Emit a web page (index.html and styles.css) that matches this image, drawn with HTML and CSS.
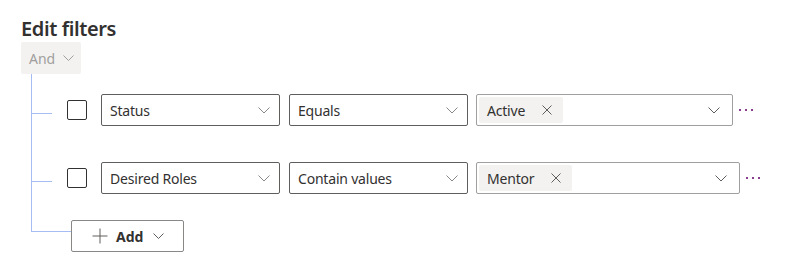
FILE: index.html
```html
<!DOCTYPE html>
<html lang="en">
<head>
	<meta charset="UTF-8">
	<title>Edit filters</title>
	<link rel="stylesheet" href="styles.css">
</head>
<body>
	<div class="panel">
		<h1 class="title">Edit filters</h1>
		<div class="group-op">
			<span>And</span>
			<svg class="chev" width="11" height="6" viewBox="0 0 11 6"><path d="M0.5 0.5 L5.5 5.5 L10.5 0.5"/></svg>
		</div>
		<div class="tree">
			<div class="row row-first">
				<div class="branch"></div>
				<div class="check"></div>
				<div class="select field">
					<span>Status</span>
					<svg class="chev" width="12" height="7" viewBox="0 0 12 7"><path d="M0.5 0.5 L6 6 L11.5 0.5"/></svg>
				</div>
				<div class="select op">
					<span>Equals</span>
					<svg class="chev" width="12" height="7" viewBox="0 0 12 7"><path d="M0.5 0.5 L6 6 L11.5 0.5"/></svg>
				</div>
				<div class="values" style="width:257px">
					<div class="tag">
						<span>Active</span>
						<svg class="x" width="10" height="10" viewBox="0 0 10 10"><path d="M0.5 0.5 L9.5 9.5 M9.5 0.5 L0.5 9.5"/></svg>
					</div>
					<svg class="chev" width="12" height="7" viewBox="0 0 12 7"><path d="M0.5 0.5 L6 6 L11.5 0.5"/></svg>
				</div>
				<svg class="more" width="15" height="3" viewBox="0 0 15 3"><rect x="0" y="0" width="2" height="2"/><rect x="6" y="0" width="2" height="2"/><rect x="12" y="0" width="2" height="2"/></svg>
			</div>
			<div class="row row-second">
				<div class="branch"></div>
				<div class="check"></div>
				<div class="select field">
					<span>Desired Roles</span>
					<svg class="chev" width="12" height="7" viewBox="0 0 12 7"><path d="M0.5 0.5 L6 6 L11.5 0.5"/></svg>
				</div>
				<div class="select op">
					<span>Contain values</span>
					<svg class="chev" width="12" height="7" viewBox="0 0 12 7"><path d="M0.5 0.5 L6 6 L11.5 0.5"/></svg>
				</div>
				<div class="values" style="width:264px">
					<div class="tag">
						<span>Mentor</span>
						<svg class="x" width="10" height="10" viewBox="0 0 10 10"><path d="M0.5 0.5 L9.5 9.5 M9.5 0.5 L0.5 9.5"/></svg>
					</div>
					<svg class="chev" width="12" height="7" viewBox="0 0 12 7"><path d="M0.5 0.5 L6 6 L11.5 0.5"/></svg>
				</div>
				<svg class="more" width="15" height="3" viewBox="0 0 15 3"><rect x="0" y="0" width="2" height="2"/><rect x="6" y="0" width="2" height="2"/><rect x="12" y="0" width="2" height="2"/></svg>
			</div>
			<div class="row row-add">
				<div class="branch-end"></div>
				<button class="add-btn">
					<svg class="plus" width="16" height="16" viewBox="0 0 16 16"><path d="M8 0.5 V15.5 M0.5 8 H15.5"/></svg>
					<span>Add</span>
					<svg class="chev" width="11" height="6" viewBox="0 0 11 6"><path d="M0.5 0.5 L5.5 5.5 L10.5 0.5"/></svg>
				</button>
			</div>
		</div>
	</div>
</body>
</html>
```

FILE: styles.css
```css
*{
	margin: 0;
	padding: 0;
	box-sizing: border-box;
}
body{
	font-family: "Noto Sans", "Open Sans", sans-serif;
	color: #323130;
	background: #fff;
}
.panel{
	padding: 15px 21px 0;
}
.title{
	font-size: 20px;
	font-weight: 600;
	line-height: 27px;
	letter-spacing: -0.4px;
}
.chev path, .x path, .plus path{
	fill: none;
	stroke: #605e5c;
	stroke-width: 1;
}
.group-op{
	width: 60px;
	height: 32px;
	background-color: #f3f2f1;
	border-radius: 2px;
	display: flex;
	align-items: center;
	gap: 8px;
	padding-left: 8px;
	font-size: 14px;
	color: #a19f9d;
}
.group-op .chev path{
	stroke: #a19f9d;
}
.tree{
	margin-left: 10px;
}
.row{
	display: flex;
	align-items: center;
}
.row-first{
	padding: 20px 0;
}
.row-second{
	padding: 16px 0;
}
.branch{
	width: 21px;
	align-self: stretch;
	border-left: 1px solid #a6bdf3;
	margin: -20px 0;
	display: flex;
	flex-direction: column;
}
.branch::before{
	content: "";
	height: 39px;
	border-bottom: 1px solid #a6bdf3;
}
.row-second .branch{
	margin: -16px 0;
}
.row-second .branch::before{
	height: 35px;
}
.check{
	width: 20px;
	height: 20px;
	border: 1px solid #323130;
	border-radius: 2px;
	margin-left: 15px;
	margin-right: 14px;
}
.select{
	width: 179px;
	height: 32px;
	border: 1px solid #605e5c;
	border-radius: 2px;
	display: flex;
	align-items: center;
	justify-content: space-between;
	padding: 0 9px 0 8px;
	font-size: 14px;
	letter-spacing: -0.2px;
	margin-right: 9px;
}
.select .chev path{
	stroke: #8a8886;
}
.select.op{
	margin-right: 8px;
}
.values{
	height: 32px;
	border: 1px solid #a19f9d;
	border-radius: 2px;
	display: flex;
	align-items: center;
	justify-content: space-between;
	padding: 0 12px 0 2px;
	font-size: 14px;
	letter-spacing: -0.2px;
	margin-right: 6px;
}
.values .chev path{
	stroke: #605e5c;
}
.tag{
	height: 26px;
	background-color: #f3f2f1;
	border-radius: 2px;
	display: flex;
	align-items: center;
	gap: 17px;
	padding: 0 11px 0 8px;
}
.x path{
	stroke: #605e5c;
}
.more{
	fill: #8a3f8e;
	margin-top: 1px;
}
.row-add{
	align-items: flex-start;
}
.branch-end{
	width: 40px;
	height: 22px;
	border-left: 1px solid #a6bdf3;
	border-bottom: 1px solid #a6bdf3;
}
.add-btn{
	margin-top: 10px;
	width: 113px;
	height: 32px;
	border: 1px solid #8a8886;
	border-radius: 2px;
	background: #fff;
	display: flex;
	align-items: center;
	padding-left: 20px;
	font-family: inherit;
	font-size: 14px;
	font-weight: 700;
	color: #323130;
}
.add-btn .plus{
	margin-right: 8px;
}
.add-btn .chev{
	margin-left: 10px;
}
```
